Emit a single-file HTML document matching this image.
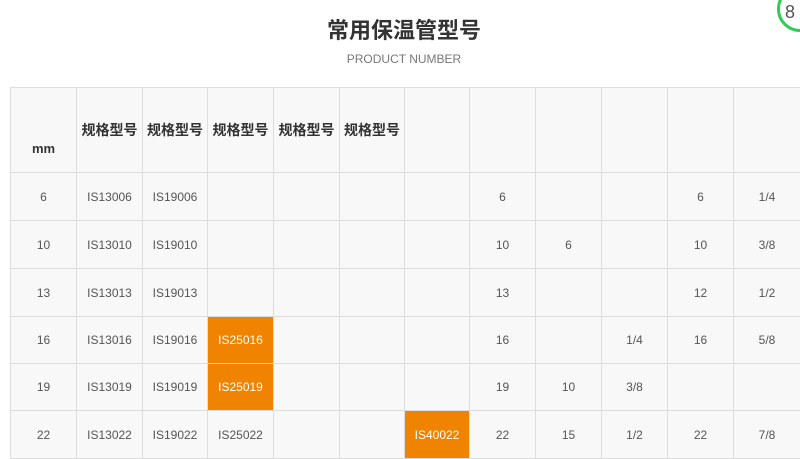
<!DOCTYPE html>
<html><head><meta charset="utf-8"><style>
body{margin:0;width:800px;height:455px;overflow:hidden;background:#fff;font-family:"Liberation Sans","Noto Sans CJK SC",sans-serif;position:relative}
h1{position:absolute;top:16px;left:0;width:808px;text-align:center;margin:0;font-size:22px;color:#333;font-weight:bold;line-height:30px}
.sub{position:absolute;top:52px;left:0;width:808px;text-align:center;font-size:12px;color:#777}
table{position:absolute;left:10px;top:87px;border-collapse:collapse;table-layout:fixed;width:790px;background:#f8f8f8}
tr{height:48px}
tr.s{height:47px}
td{border:1px solid #ddd;text-align:center;font-size:12px;color:#555;padding:0}
tr.h{height:85px}
tr.h td{font-weight:bold;color:#333;font-size:14px;vertical-align:middle}
tr.h td.mm{vertical-align:bottom;padding-bottom:16px;font-size:13px}
tr.h td.t{padding-bottom:0}
.o{background:#f08300;color:#fff}
.w{position:absolute;left:777px;top:-14px;width:40px;height:40px;border-radius:50%;border:3px solid #2ecc55;background:#fff;font-size:18px;color:#555;text-indent:5px;line-height:46px}
</style></head><body>
<h1>常用保温管型号</h1>
<div class="sub">PRODUCT NUMBER</div>
<div class="w">8</div>
<table>
<colgroup><col style="width:66px"><col style="width:66px"><col style="width:65px"><col style="width:66px"><col style="width:66px"><col style="width:65px"><col style="width:65px"><col style="width:66px"><col style="width:66px"><col style="width:66px"><col style="width:66px"><col style="width:67px"></colgroup>
<tr class="h"><td class="mm">mm</td><td class="t">规格型号</td><td class="t">规格型号</td><td class="t">规格型号</td><td class="t">规格型号</td><td class="t">规格型号</td><td></td><td></td><td></td><td></td><td></td><td></td></tr>
<tr><td>6</td><td>IS13006</td><td>IS19006</td><td></td><td></td><td></td><td></td><td>6</td><td></td><td></td><td>6</td><td>1/4</td></tr>
<tr><td>10</td><td>IS13010</td><td>IS19010</td><td></td><td></td><td></td><td></td><td>10</td><td>6</td><td></td><td>10</td><td>3/8</td></tr>
<tr><td>13</td><td>IS13013</td><td>IS19013</td><td></td><td></td><td></td><td></td><td>13</td><td></td><td></td><td>12</td><td>1/2</td></tr>
<tr class="s"><td>16</td><td>IS13016</td><td>IS19016</td><td class="o">IS25016</td><td></td><td></td><td></td><td>16</td><td></td><td>1/4</td><td>16</td><td>5/8</td></tr>
<tr class="s"><td>19</td><td>IS13019</td><td>IS19019</td><td class="o">IS25019</td><td></td><td></td><td></td><td>19</td><td>10</td><td>3/8</td><td></td><td></td></tr>
<tr><td>22</td><td>IS13022</td><td>IS19022</td><td>IS25022</td><td></td><td></td><td class="o">IS40022</td><td>22</td><td>15</td><td>1/2</td><td>22</td><td>7/8</td></tr>
</table>
</body></html>
